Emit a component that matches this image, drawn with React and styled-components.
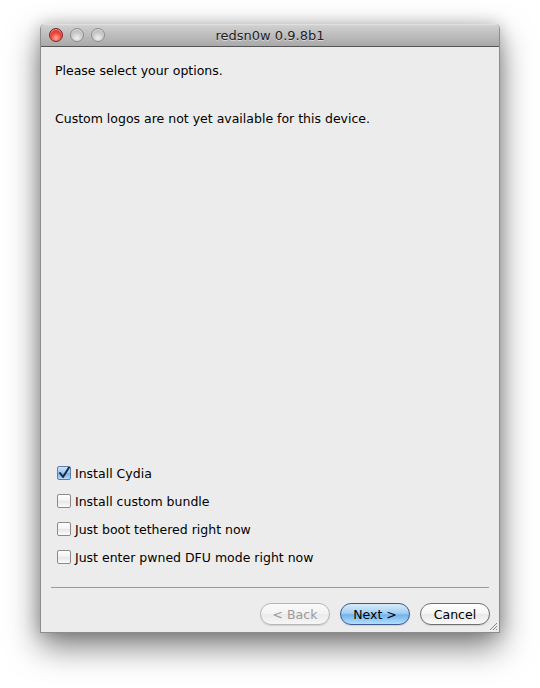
import React from 'react';
import styled, { createGlobalStyle } from 'styled-components';

const Global = createGlobalStyle`
    html, body {
        margin: 0;
        background: #ffffff;
    }
    body {
        font-family: 'DejaVu Sans', 'Liberation Sans', sans-serif;
    }
`;

const Stage = styled.div`
    width: 540px;
    height: 688px;
    padding: 24px 0 0 40px;
    box-sizing: border-box;
`;

// 창 전체, 큰 그림자
const Window = styled.div`
    width: 460px;
    height: 609px;
    display: flex;
    flex-direction: column;
    border: 1px solid #8c8c8c;
    border-top: none;
    box-sizing: border-box;
    border-radius: 5px 5px 0 0;
    background: #ececec;
    box-shadow: 0 14px 32px rgba(0, 0, 0, 0.5), 0 0 16px rgba(0, 0, 0, 0.2);
`;

const TitleBar = styled.div`
    height: 22px;
    flex-shrink: 0;
    display: flex;
    align-items: center;
    position: relative;
    border-radius: 5px 5px 0 0;
    background: linear-gradient(#e6e6e6 0%, #cfcfcf 8%, #bdbdbd 50%, #a9a9a9 100%);
    border-bottom: 1px solid #555;
    padding-left: 8px;
    gap: 7px;
`;

const Light = styled.div`
    width: 14px;
    height: 14px;
    border-radius: 50%;
    box-sizing: border-box;
    border: 1px solid ${p => (p.red ? '#8a1f1f' : '#8d8d8d')};
    background: ${p =>
        p.red
            ? 'radial-gradient(circle at 50% 75%, #ffb0a0 0%, #f04a3c 45%, #b51612 100%)'
            : 'radial-gradient(circle at 50% 75%, #f0f0f0 0%, #cdcdcd 45%, #a6a6a6 100%)'};
    box-shadow: inset 0 1px 1px rgba(255, 255, 255, 0.6);
`;

const Title = styled.div`
    position: absolute;
    left: 0;
    right: 0;
    text-align: center;
    font-size: 13px;
    color: #222;
    text-shadow: 0 1px 0 rgba(255, 255, 255, 0.5);
    pointer-events: none;
`;

const Body = styled.div`
    flex: 1;
    display: flex;
    flex-direction: column;
    padding: 16px 14px 0 14px;
    font-size: 12.5px;
    color: #000;
`;

const Text = styled.p`
    margin: 0 0 ${p => p.gap || 0}px 0;
    line-height: 16px;
`;

const Spacer = styled.div`
    flex-grow: 1;
`;

const Options = styled.div`
    display: flex;
    flex-direction: column;
    gap: 12px;
    padding-left: 2px;
    margin-bottom: 22px;
`;

const Row = styled.label`
    display: flex;
    align-items: center;
    gap: 4px;
    height: 16px;
`;

const Box = styled.span`
    width: 14px;
    height: 14px;
    box-sizing: border-box;
    border: 1px solid #8a8a8a;
    border-radius: 2px;
    display: flex;
    align-items: center;
    justify-content: center;
    background: ${p =>
        p.checked
            ? 'linear-gradient(#cfe3f7 0%, #9cc4ee 50%, #74aee8 51%, #b4d8fb 100%)'
            : 'linear-gradient(#ffffff 0%, #f1f1f1 50%, #e6e6e6 51%, #fbfbfb 100%)'};
    border-color: ${p => (p.checked ? '#5b7fa8' : '#8a8a8a')};
`;

const Divider = styled.div`
    height: 1px;
    background: #9a9a9a;
    margin: 0 -4px;
`;

const Buttons = styled.div`
    display: flex;
    justify-content: flex-end;
    gap: 10px;
    padding: 15px 0 0 0;
    margin-right: -5px;
    height: 44px;
    box-sizing: border-box;
    position: relative;
`;

const Button = styled.div`
    width: 70px;
    height: 22px;
    box-sizing: border-box;
    border-radius: 11px;
    display: flex;
    align-items: center;
    justify-content: center;
    font-size: 12.5px;
    border: 1px solid ${p => (p.primary ? '#3d5b8a' : p.disabled ? '#b6b6b6' : '#6f6f6f')};
    color: ${p => (p.disabled ? '#9a9a9a' : '#000')};
    background: ${p =>
        p.primary
            ? 'linear-gradient(#d6ebfb 0%, #a6cff2 45%, #73b3ec 55%, #b2e0ff 100%)'
            : p.disabled
            ? 'linear-gradient(#fbfbfb 0%, #f2f2f2 50%, #eaeaea 51%, #f6f6f6 100%)'
            : 'linear-gradient(#ffffff 0%, #f4f4f4 50%, #e8e8e8 51%, #fafafa 100%)'};
    box-shadow: 0 1px 1px rgba(0, 0, 0, 0.12);
`;

const Grip = styled.svg`
    position: absolute;
    right: -8px;
    bottom: 1px;
`;

const Check = () => (
    <svg width="12" height="12" viewBox="0 0 12 12">
        <path d="M2 6 L5 10 L11 0.5" fill="none" stroke="#1c2a44" strokeWidth="2" strokeLinecap="round" strokeLinejoin="round" />
    </svg>
);

const options = [
    { label: 'Install Cydia', checked: true },
    { label: 'Install custom bundle' },
    { label: 'Just boot tethered right now' },
    { label: 'Just enter pwned DFU mode right now' },
];

const App = () => (
    <Stage>
        <Global />
        <Window>
            <TitleBar>
                <Light red />
                <Light />
                <Light />
                <Title>redsn0w 0.9.8b1</Title>
            </TitleBar>
            <Body>
                <Text gap={32}>Please select your options.</Text>
                <Text>Custom logos are not yet available for this device.</Text>
                <Spacer />
                <Options>
                    {options.map(o => (
                        <Row key={o.label}>
                            <Box checked={o.checked}>{o.checked && <Check />}</Box>
                            {o.label}
                        </Row>
                    ))}
                </Options>
                <Divider />
                <Buttons>
                    <Button disabled>&lt; Back</Button>
                    <Button primary>Next &gt;</Button>
                    <Button>Cancel</Button>
                    <Grip width="10" height="10" viewBox="0 0 10 10">
                        <path d="M9 2 L2 9 M9 5 L5 9 M9 8 L8 9" stroke="#8a8a8a" strokeWidth="1" />
                    </Grip>
                </Buttons>
            </Body>
        </Window>
    </Stage>
);

export default App;
